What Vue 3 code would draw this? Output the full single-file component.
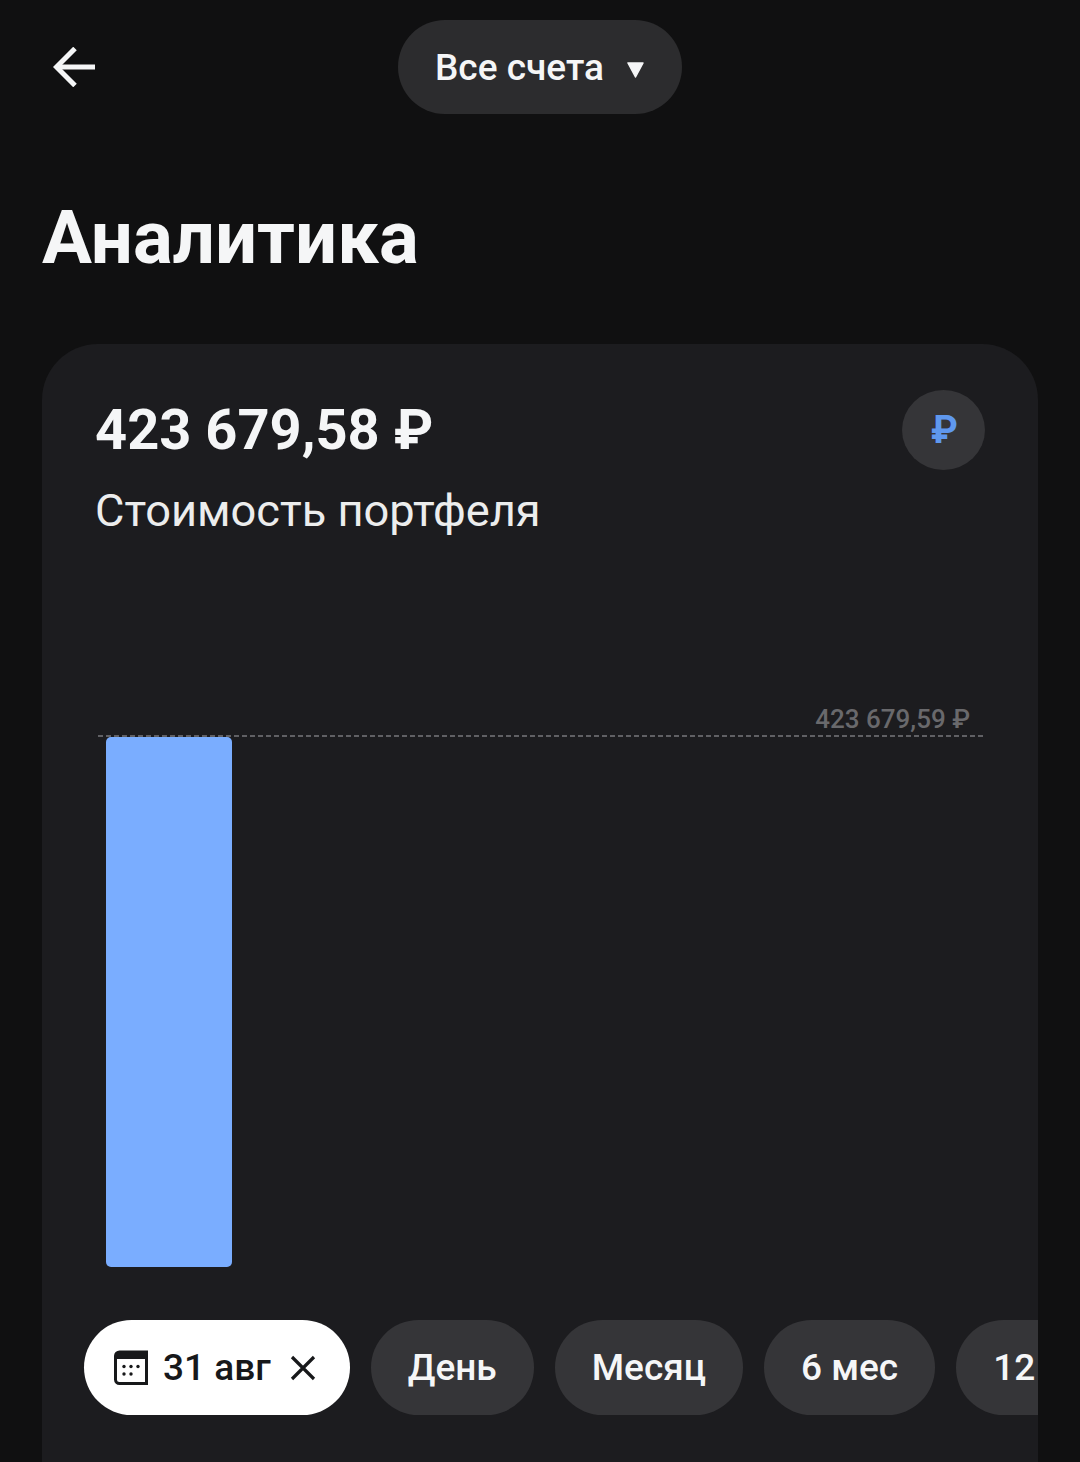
<template>
  <div class="screen">
    <header class="top-bar">
      <button class="back-btn">
        <svg width="42" height="40" viewBox="0 0 42 40" fill="none" stroke="#f5f6f7" stroke-width="5">
          <path d="M42 20H4" />
          <path d="M22 1.500L3.500 20L22 38.500" />
        </svg>
      </button>
      <div class="account-pill">
        <span>Все счета</span>
        <svg class="pill-caret" width="19" height="16" viewBox="0 0 19 16"><path d="M2 1H17L9.500 15Z" fill="#f5f6f7" stroke="#f5f6f7" stroke-width="1.500" stroke-linejoin="round" /></svg>
      </div>
    </header>

    <h1 class="page-title">Аналитика</h1>

    <section class="card">
      <div class="card-head">
        <div>
          <div class="amount">423 679,58 ₽</div>
          <div class="caption">Стоимость портфеля</div>
        </div>
        <div class="currency-badge">₽</div>
      </div>

      <div class="chart">
        <div class="chart-label">423 679,59 ₽</div>
        <div class="chart-line"></div>
        <div class="bar"></div>
      </div>

      <div class="chips">
        <div class="chip chip-date">
          <svg width="36" height="36" viewBox="0 0 36 36">
            <path d="M2.500 6a4 4 0 0 1 4-4h27v31.500H6.500a4 4 0 0 1-4-4Z" fill="none" stroke="#17181a" stroke-width="3" />
            <path d="M2.500 6a4 4 0 0 1 4-4h27v7H2.500Z" fill="#17181a" />
            <g fill="#17181a">
              <circle cx="11" cy="16.500" r="1.700" /><circle cx="18" cy="16.500" r="1.700" /><circle cx="25" cy="16.500" r="1.700" />
              <circle cx="11" cy="24" r="1.700" /><circle cx="18" cy="24" r="1.700" />
            </g>
          </svg>
          <span>31 авг</span>
          <svg class="close-icon" width="26" height="26" viewBox="0 0 26 26" stroke="#17181a" stroke-width="3.200">
            <path d="M2 2L24 24M24 2L2 24" />
          </svg>
        </div>
        <div v-for="period in periods" :key="period" class="chip">{{ period }}</div>
      </div>
    </section>
  </div>
</template>

<script setup>
const periods = ['День', 'Месяц', '6 мес', '12'];
</script>

<style>
html, body { margin: 0; background: #101011; }
</style>

<style scoped>
.screen {
  height: 1462px;
  overflow: hidden;
  background: #101011;
  color: #f5f6f7;
  font-family: Roboto, "Noto Sans", sans-serif;
  display: flex;
  flex-direction: column;
}

.top-bar { position: relative; display: flex; justify-content: center; padding-top: 20px; }
.back-btn { position: absolute; left: 53px; top: 47px; padding: 0; background: none; border: none; width: 42px; height: 40px; }
.account-pill {
  width: 284px; height: 94px; box-sizing: border-box; border-radius: 47px; background: #2c2c2e;
  display: flex; align-items: center; gap: 22px; padding-left: 37px;
  font-size: 37px; font-weight: 500;
}
.pill-caret { margin-top: 6px; }

.page-title { margin: 0; padding: 82px 0 0 42px; font-size: 74.4px; line-height: 84px; font-weight: 700; }

.card {
  margin: 64px 42px 0; flex: 1; min-height: 0; overflow: hidden;
  background: #1c1c1f; border-radius: 56px 56px 0 0;
  padding: 46px 0 0 53px; box-sizing: border-box;
  display: flex; flex-direction: column;
}
.card-head { display: flex; justify-content: space-between; padding-right: 53px; }
.amount { font-size: 56px; line-height: 80px; font-weight: 700; }
.caption { font-size: 45.2px; line-height: 52px; margin-top: 15px; color: #eceded; }
.currency-badge {
  width: 83px; height: 80px; border-radius: 50%; background: #353538; color: #5f98ee; padding-left: 2px; box-sizing: border-box;
  display: flex; align-items: center; justify-content: center; font-size: 38px; font-weight: 700;
}

.chart { position: relative; height: 783px; margin-right: 55px; flex-shrink: 0; }
.chart-label { position: absolute; right: 13px; top: 165px; font-size: 26px; line-height: 34px; color: #69696c; font-weight: 500; }
.chart-line {
  position: absolute; left: 0; right: 0; top: 198px; height: 2px;
  background: repeating-linear-gradient(90deg, #606064 0 5px, transparent 5px 8px) 3px 0;
}
.bar { position: absolute; left: 11px; top: 200px; width: 126px; height: 530px; background: #7aadff; border-radius: 5px; }

.chips { display: flex; gap: 21px; margin-left: -11px; white-space: nowrap; }
.chip {
  height: 95px; border-radius: 48px; background: #353538; padding: 0 37px; box-sizing: border-box; flex-shrink: 0;
  display: flex; align-items: center; font-size: 37px; font-weight: 500;
}
.chip:last-child { min-width: 170px; }
.chip-date { background: #fff; color: #17181a; padding: 0 34px 0 29px; gap: 14px; }
.close-icon { margin-left: 5px; }
</style>
